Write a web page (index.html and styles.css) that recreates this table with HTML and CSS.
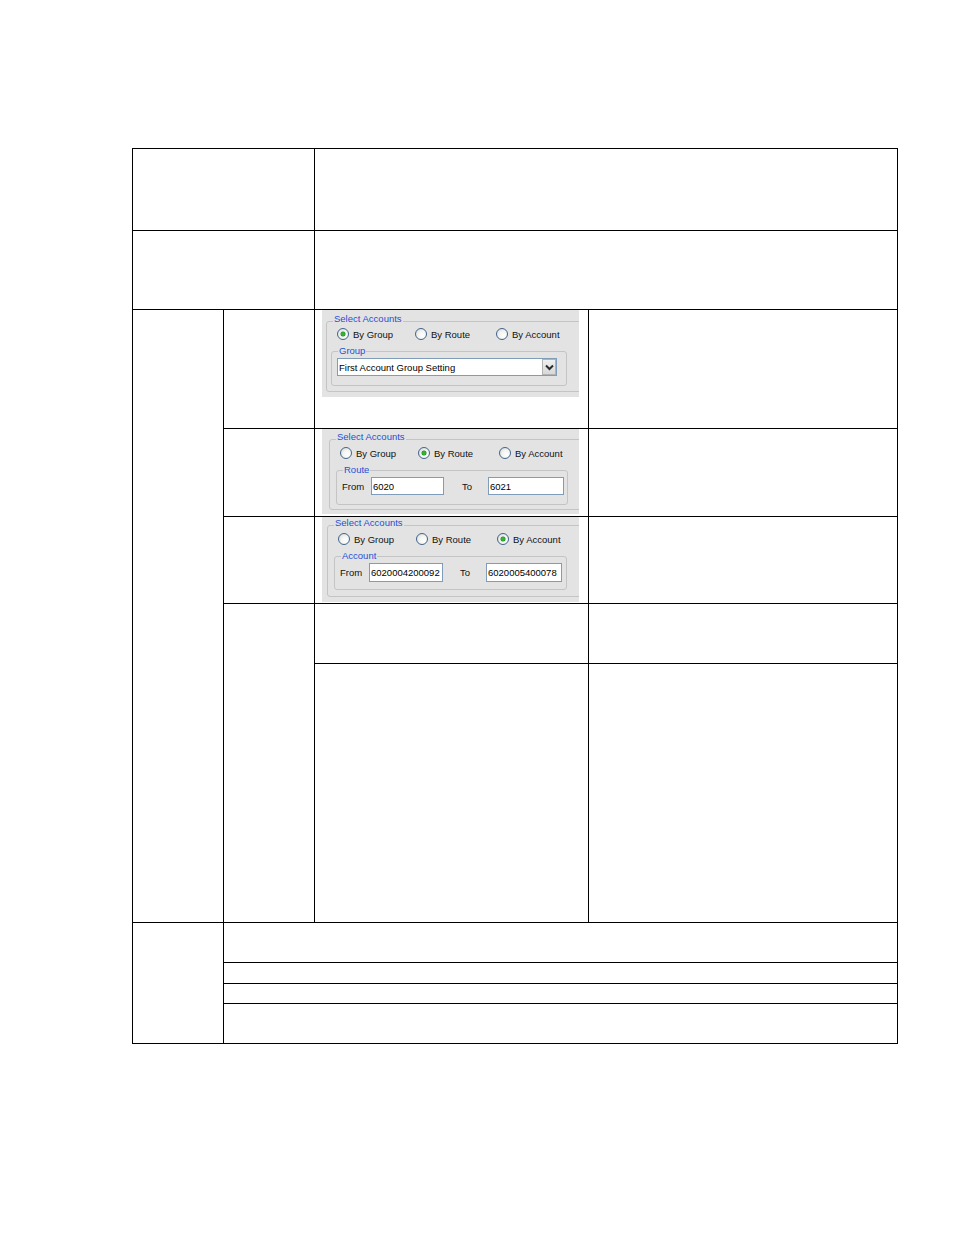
FILE: index.html
```html
<!DOCTYPE html>
<html lang="en">
<head>
<meta charset="utf-8">
<title>Select Accounts</title>
<link rel="stylesheet" href="styles.css">
</head>
<body>
<div class="page">
  <div class="tbl">
    <div class="cell r1-left"></div>
    <div class="cell r1-right"></div>
    <div class="cell r2-left"></div>
    <div class="cell r2-right"></div>

    <div class="cell side-a"></div>

    <div class="cell g-row3 col-b"></div>
    <div class="cell g-row3 col-c shot-cell">
      <div class="dlg dlg-1">
        <div class="gbox outer">
          <span class="legend">Select Accounts</span>
          <div class="radios">
            <div class="opt"><span class="radio on"></span>By Group</div>
            <div class="opt opt-2"><span class="radio"></span>By Route</div>
            <div class="opt opt-3"><span class="radio"></span>By Account</div>
          </div>
          <div class="gbox inner">
            <span class="legend">Group</span>
            <div class="combo">
              <span class="combo-text">First Account Group Setting</span>
              <span class="combo-btn"><svg width="9" height="7" viewBox="0 0 9 7"><path d="M1 1.5 L4.5 5 L8 1.5" fill="none" stroke="#2b2b2b" stroke-width="2"/></svg></span>
            </div>
          </div>
        </div>
      </div>
    </div>
    <div class="cell g-row3 col-d"></div>

    <div class="cell g-row4 col-b"></div>
    <div class="cell g-row4 col-c shot-cell">
      <div class="dlg dlg-2">
        <div class="gbox outer">
          <span class="legend">Select Accounts</span>
          <div class="radios">
            <div class="opt"><span class="radio"></span>By Group</div>
            <div class="opt opt-2"><span class="radio on"></span>By Route</div>
            <div class="opt opt-3"><span class="radio"></span>By Account</div>
          </div>
          <div class="gbox inner">
            <span class="legend">Route</span>
            <div class="ft">
              <span class="lbl-from">From</span>
              <span class="field field-1">6020</span>
              <span class="lbl-to">To</span>
              <span class="field field-2">6021</span>
            </div>
          </div>
        </div>
      </div>
    </div>
    <div class="cell g-row4 col-d"></div>

    <div class="cell g-row5 col-b"></div>
    <div class="cell g-row5 col-c shot-cell">
      <div class="dlg dlg-3">
        <div class="gbox outer">
          <span class="legend">Select Accounts</span>
          <div class="radios">
            <div class="opt"><span class="radio"></span>By Group</div>
            <div class="opt opt-2"><span class="radio"></span>By Route</div>
            <div class="opt opt-3"><span class="radio on"></span>By Account</div>
          </div>
          <div class="gbox inner">
            <span class="legend">Account</span>
            <div class="ft">
              <span class="lbl-from">From</span>
              <span class="field field-1">6020004200092</span>
              <span class="lbl-to">To</span>
              <span class="field field-2">6020005400078</span>
            </div>
          </div>
        </div>
      </div>
    </div>
    <div class="cell g-row5 col-d"></div>

    <div class="cell side-b"></div>
    <div class="cell g-row6 col-c"></div>
    <div class="cell g-row6 col-d"></div>
    <div class="cell g-row7 col-c"></div>
    <div class="cell g-row7 col-d"></div>

    <div class="cell side-c"></div>
    <div class="cell wide w8"></div>
    <div class="cell wide w9"></div>
    <div class="cell wide w10"></div>
    <div class="cell wide w11"></div>
  </div>
</div>
</body>
</html>
```

FILE: styles.css
```css
html, body {
  margin: 0;
  background: #fff;
}
body {
  font-family: "Liberation Sans", Arial, sans-serif;
}
.page {
  padding: 148px 0 0 132px;
}
.tbl {
  display: grid;
  grid-template-columns: 90px 90px 273px 308px;
  grid-template-rows: 81px 78px 118px 87px 86px 59px 258px 39px 20px 19px 39px;
  gap: 1px;
  background: #000;
  border: 1px solid #000;
  width: max-content;
}
.cell { background: #fff; }

.r1-left { grid-column: 1 / 3; grid-row: 1; }
.r1-right { grid-column: 3 / 5; grid-row: 1; }
.r2-left { grid-column: 1 / 3; grid-row: 2; }
.r2-right { grid-column: 3 / 5; grid-row: 2; }
.side-a { grid-column: 1; grid-row: 3 / 8; }
.col-b { grid-column: 2; }
.col-c { grid-column: 3; }
.col-d { grid-column: 4; }
.g-row3 { grid-row: 3; }
.g-row4 { grid-row: 4; }
.g-row5 { grid-row: 5; }
.g-row6 { grid-row: 6; }
.g-row7 { grid-row: 7; }
.side-b { grid-column: 2; grid-row: 6 / 8; }
.side-c { grid-column: 1; grid-row: 8 / 12; }
.wide { grid-column: 2 / 5; }
.w8 { grid-row: 8; }
.w9 { grid-row: 9; }
.w10 { grid-row: 10; }
.w11 { grid-row: 11; }

/* dialog snapshots */
.shot-cell { padding-left: 7px; }
.dlg {
  width: 257px;
  background: #e3e3e3;
  overflow: hidden;
  font-size: 9.5px;
  line-height: 11px;
  color: #111;
}
.dlg-1 { height: 87px; }
.dlg-2, .dlg-3 { height: 85px; }

.gbox {
  position: relative;
  border: 1px solid #c4c4c4;
  border-radius: 3px;
}
.outer { width: 265px; }
.dlg-1 .outer { margin: 11px 0 0 4px; padding-bottom: 5px; }
.dlg-2 .outer { margin: 10px 0 0 7px; padding-bottom: 4px; }
.dlg-3 .outer { margin: 8px 0 0 5px; padding-bottom: 6px; }

.legend {
  position: absolute;
  left: 6px;
  top: -7px;
  padding: 0 1px;
  background: #e3e3e3;
  color: #1f4fd6;
  line-height: 11px;
  white-space: nowrap;
}
.outer > .legend { top: -9px; }

.radios {
  display: flex;
  height: 12px;
  margin: 7px 0 0 10px;
}
.dlg-1 .radios { margin-top: 6px; }
.opt {
  display: flex;
  align-items: center;
  gap: 4px;
  width: 78px;
  white-space: nowrap;
}
.opt-2 { width: 81px; }
.opt-3 { width: auto; }
.radio {
  position: relative;
  box-sizing: border-box;
  width: 12px;
  height: 12px;
  border: 1px solid #41648d;
  border-radius: 50%;
  background: radial-gradient(circle at 65% 65%, #ffffff 0%, #f4f4f1 45%, #d3d3cc 100%);
  flex: none;
}
.radio.on::after {
  content: "";
  position: absolute;
  left: 3px;
  top: 3px;
  width: 4px;
  height: 4px;
  border-radius: 50%;
  background: #35b335;
  box-shadow: 0 0 0 0.5px #1e8a1e;
}

.inner {
  margin: 11px 0 0 6px;
  height: 33px;
}
.dlg-1 .inner { margin-left: 4px; width: 234px; }
.dlg-2 .inner { width: 230px; }
.dlg-3 .inner { width: 231px; height: 32px; }

.combo {
  display: flex;
  align-items: center;
  margin: 6px 0 0 5px;
  width: 218px;
  height: 16px;
  border: 1px solid #7f9db9;
  background: #fff;
}
.combo-text {
  flex: 1;
  padding-left: 1px;
  color: #000;
  white-space: nowrap;
}
.combo-btn {
  box-sizing: border-box;
  width: 14px;
  height: 16px;
  background: linear-gradient(#f0f0f0, #d8d8d8);
  border: 1px solid #b3b3b3;
  display: flex;
  align-items: center;
  justify-content: center;
}

.ft {
  display: flex;
  align-items: center;
  margin: 6px 0 0 5px;
}
.lbl-from { width: 29px; }
.lbl-to { width: 26px; }
.field {
  display: flex;
  align-items: center;
  height: 16px;
  border: 1px solid #7f9db9;
  background: #fff;
  padding-left: 1px;
  color: #000;
  white-space: nowrap;
  overflow: hidden;
}
.field-1 { width: 70px; margin-right: 18px; }
.field-2 { width: 73px; }
.dlg-3 .field { height: 17px; }
.dlg-3 .field-1 { width: 71px; margin-right: 17px; }
```
